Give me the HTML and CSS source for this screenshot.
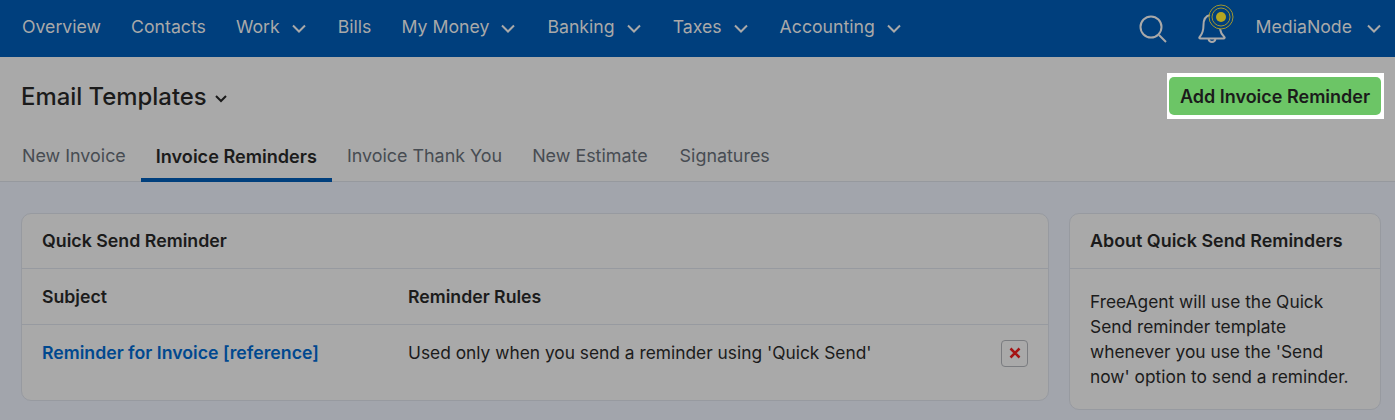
FILE: index.html
```html
<!DOCTYPE html>
<html lang="en">
<head>
    <meta charset="UTF-8">
    <title>Email Templates</title>
    <link rel="stylesheet" href="styles.css">
</head>
<body>
    <div class="topbar">
        <ul class="nav">
            <li>Overview</li>
            <li>Contacts</li>
            <li class="has-menu">Work<svg class="chev" viewBox="0 0 14 9"><path d="M1 1.500l6 6 6-6"/></svg></li>
            <li>Bills</li>
            <li class="has-menu">My Money<svg class="chev" viewBox="0 0 14 9"><path d="M1 1.500l6 6 6-6"/></svg></li>
            <li class="has-menu">Banking<svg class="chev" viewBox="0 0 14 9"><path d="M1 1.500l6 6 6-6"/></svg></li>
            <li class="has-menu">Taxes<svg class="chev" viewBox="0 0 14 9"><path d="M1 1.500l6 6 6-6"/></svg></li>
            <li class="has-menu">Accounting<svg class="chev" viewBox="0 0 14 9"><path d="M1 1.500l6 6 6-6"/></svg></li>
        </ul>
        <div class="tools">
            <svg class="search" viewBox="0 0 28 28"><circle cx="12" cy="12" r="10.500"/><path d="M20 20l7 7"/></svg>
            <svg class="bell" viewBox="0 0 38 42">
                <path class="bell-line" d="M13 11C8.500 12 6.500 16.500 6.500 21c0 6-1.500 9.500-4 12.200-.5.700 0 1.300.8 1.300h23.400c.8 0 1.300-.7.800-1.300-2.300-2.300-4-4.700-4.500-8.200"/>
                <path class="bell-line" d="M11.500 35c.5 2 2 3 3.500 3s3-1 3.500-3"/>
                <circle class="ring" cx="24" cy="13" r="12"/>
                <circle class="ring" cx="24" cy="13" r="9"/>
                <circle class="dot" cx="24" cy="13" r="5"/>
            </svg>
            <span class="user">MediaNode<svg class="chev" viewBox="0 0 14 9"><path d="M1 1.500l6 6 6-6"/></svg></span>
        </div>
    </div>

    <div class="page-head">
        <div class="title-row">
            <h1>Email Templates <svg class="title-chev" viewBox="0 0 14 9"><path d="M2 2l5 5 5-5"/></svg></h1>
            <div class="btn-ring"><button class="btn-add">Add Invoice Reminder</button></div>
        </div>
        <ul class="tabs">
            <li>New Invoice</li>
            <li class="active">Invoice Reminders</li>
            <li>Invoice Thank You</li>
            <li>New Estimate</li>
            <li>Signatures</li>
        </ul>
    </div>

    <div class="content">
        <div class="card card-main">
            <h2 class="card-title">Quick Send Reminder</h2>
            <div class="row row-head">
                <div class="col-subject">Subject</div>
                <div class="col-rules">Reminder Rules</div>
            </div>
            <div class="row row-item">
                <a class="col-subject" href="#">Reminder for Invoice [reference]</a>
                <div class="col-rules">Used only when you send a reminder using 'Quick Send'</div>
                <button class="btn-delete"><svg viewBox="0 0 12 12"><path d="M1.500 1.500l9 9m0-9l-9 9"/></svg></button>
            </div>
        </div>
        <div class="card card-side">
            <h2 class="card-title">About Quick Send Reminders</h2>
            <p>FreeAgent will use the Quick Send reminder template whenever you use the 'Send now' option to send a reminder.</p>
        </div>
    </div>
</body>
</html>
```

FILE: styles.css
```css
* {
    margin: 0;
    padding: 0;
    box-sizing: border-box;
}

html, body {
    height: 100%;
    overflow: hidden;
}

body {
    font-family: 'Inter', 'Open Sans', sans-serif;
    font-size: 17.35px;
    color: #1b1b1b;
    background-color: #a2a5ac;
}

ul {
    list-style: none;
}

.chev {
    width: 14px;
    height: 9px;
    margin-left: 12px;
    fill: none;
    stroke: #a9a9a9;
    stroke-width: 2;
}

.topbar {
    height: 57px;
    background-color: #003f7d;
    color: #a9a9a9;
    display: flex;
    align-items: center;
    justify-content: space-between;
    padding: 0 14px 4px 22px;
    font-size: 17.7px;
}

.nav {
    display: flex;
    gap: 30px;
}

.has-menu {
    margin-right: 2px;
}

.tools {
    display: flex;
    align-items: center;
}

.search {
    width: 28px;
    height: 28px;
    margin-top: 4px;
    fill: none;
    stroke: #a9a9a9;
    stroke-width: 2;
}

.bell {
    width: 38px;
    height: 42px;
    margin-left: 30px;
    margin-top: -3px;
    fill: none;
}

.bell-line {
    stroke: #a9a9a9;
    stroke-width: 2;
    fill: none;
}

.ring {
    stroke: #a09630;
    stroke-width: 1;
}

.dot {
    fill: #b5a621;
}

.user {
    margin-left: 21px;
}

.user .chev {
    margin-left: 15px;
}

.page-head {
    height: 125px;
    background-color: #a9a9a9;
    border-bottom: 1px solid #96999e;
}

.title-row {
    display: flex;
    align-items: center;
    justify-content: space-between;
    padding: 16px 11px 0 21px;
}

h1 {
    font-size: 23.9px;
    font-weight: 500;
    display: flex;
    align-items: center;
    gap: 7px;
}

.title-chev {
    width: 14px;
    height: 9px;
    margin-top: 4px;
    fill: none;
    stroke: #1b1b1b;
    stroke-width: 2;
}

.btn-ring {
    background-color: #fff;
    padding: 4px 3px 4px 2px;
}

.btn-add {
    display: block;
    width: 212px;
    height: 38px;
    padding-top: 1px;
    border: none;
    border-radius: 5px;
    background-color: #6cc566;
    color: #1b1b1b;
    font-family: inherit;
    font-size: 18px;
    font-weight: 600;
}

.tabs {
    display: flex;
    margin-top: 17px;
    padding-left: 7px;
}

.tabs li {
    height: 46px;
    padding: 9px 15px 0;
    font-size: 17.9px;
    color: #474c52;
}

.tabs li:last-child {
    margin-left: 2px;
}

.tabs li.active {
    color: #1b1b1b;
    font-size: 18.1px;
    font-weight: 600;
    border-bottom: 4px solid #003f7d;
}

.content {
    display: flex;
    align-items: flex-start;
    gap: 20px;
    padding: 31px 14px 0 21px;
}

.card {
    background-color: #a9a9a9;
    border: 1px solid #979aa0;
    border-radius: 10px;
}

.card-main {
    flex: 1;
    height: 188px;
}

.card-side {
    width: 312px;
    height: 197px;
}

.card-title {
    height: 55px;
    padding: 16px 20px 0;
    font-size: 17.8px;
    font-weight: 600;
    border-bottom: 1px solid #979aa0;
}

.card-side .card-title {
    font-size: 17.9px;
}

.row {
    display: flex;
    align-items: center;
    padding: 0 20px;
}

.row-head {
    height: 56px;
    font-size: 17.7px;
    font-weight: 600;
    border-bottom: 1px solid #979aa0;
}

.row-item {
    height: 56px;
}

.col-subject {
    width: 366px;
}

a.col-subject {
    color: #00488f;
    font-size: 17.7px;
    font-weight: 600;
    text-decoration: none;
    margin-top: -2px;
}

.row-item .col-rules {
    margin-top: -2px;
}

.col-rules {
    flex: 1;
}

.btn-delete {
    width: 27px;
    height: 27px;
    border: 1px solid #7a7c80;
    border-radius: 4px;
    background-color: #a9a9a9;
    display: flex;
    align-items: center;
    justify-content: center;
}

.btn-delete svg {
    width: 12px;
    height: 12px;
    fill: none;
    stroke: #a51414;
    stroke-width: 2.5;
}

.card-side p {
    padding: 20px 20px 0;
    line-height: 25px;
}
```
